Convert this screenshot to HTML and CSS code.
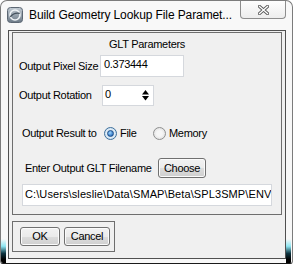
FILE: index.html
```html
<!DOCTYPE html>
<html lang="en">
<head>
    <meta charset="UTF-8">
    <title>Build Geometry Lookup File Parameters</title>
    <link rel="stylesheet" href="styles.css">
</head>
<body>
    <div class="window">
        <div class="titlebar">
            <svg class="app-icon" viewBox="0 0 16 16">
                <defs>
                    <linearGradient id="iconFill" x1="0" y1="0" x2="0" y2="1">
                        <stop offset="0" stop-color="#c3ccd4"/>
                        <stop offset="1" stop-color="#6c7a87"/>
                    </linearGradient>
                </defs>
                <rect x="0.5" y="0.5" width="15" height="15" rx="3" fill="url(#iconFill)" stroke="#5d6874"/>
                <circle cx="8" cy="8" r="5" fill="none" stroke="#eef2f5" stroke-width="1.6"/>
                <path d="M3.2 9.8 Q7.5 5 12.8 6.4" fill="none" stroke="#44505c" stroke-width="1.3"/>
            </svg>
            <span class="title">Build Geometry Lookup File Paramet...</span>
            <div class="close-btn">
                <svg width="11" height="10" viewBox="0 0 11 10">
                    <path d="M1.5 1.5 L9.5 8.5 M9.5 1.5 L1.5 8.5" stroke="#5c5c5c" stroke-width="3.2" stroke-linecap="square"/>
                    <path d="M1.5 1.5 L9.5 8.5 M9.5 1.5 L1.5 8.5" stroke="#ffffff" stroke-width="1.3" stroke-linecap="square"/>
                </svg>
            </div>
        </div>

        <div class="client">
            <div class="group">
                <div class="group-title">GLT Parameters</div>

                <div class="row row-pixel">
                    <span class="label label-pixel">Output Pixel Size</span>
                    <div class="field field-pixel">0.373444</div>
                </div>

                <div class="row row-rotation">
                    <span class="label label-rotation">Output Rotation</span>
                    <div class="field spinner">
                        <span class="spin-text">0</span>
                        <span class="spin-arrows">
                            <svg width="7" height="13" viewBox="0 0 7 13">
                                <polygon points="0,5.5 3.5,1 7,5.5" fill="#000"/>
                                <polygon points="0,7 7,7 3.5,11.5" fill="#000"/>
                            </svg>
                        </span>
                    </div>
                </div>

                <div class="row row-result">
                    <span class="label label-result">Output Result to</span>
                    <span class="option option-file"><span class="radio checked"></span><span class="option-text">File</span></span>
                    <span class="option"><span class="radio"></span><span class="option-text">Memory</span></span>
                </div>

                <div class="row row-filename">
                    <span class="label label-filename">Enter Output GLT Filename</span>
                    <button class="btn btn-choose">Choose</button>
                </div>

                <div class="row row-path">
                    <div class="field field-path">C:\Users\sleslie\Data\SMAP\Beta\SPL3SMP\ENV</div>
                </div>
            </div>

            <div class="button-box">
                <button class="btn btn-ok">OK</button>
                <button class="btn btn-cancel">Cancel</button>
            </div>
        </div>
    </div>
</body>
</html>
```

FILE: styles.css
```css
body {
    margin: 0;
    background: #fff;
    font-family: "Liberation Sans", Arial, sans-serif;
    font-size: 11px;
    letter-spacing: -0.3px;
    color: #000;
}

.window {
    position: relative;
    width: 293px;
    height: 264px;
    box-sizing: border-box;
    border: 1px solid #7c7c7c;
    border-bottom-color: #1a1a1a;
    border-radius: 7px 7px 3px 3px;
    background: #f8f8f8;
    display: flex;
    flex-direction: column;
    overflow: hidden;
}

/* dark glass glints in the bottom corners of the frame */
.window::before,
.window::after {
    content: "";
    position: absolute;
    bottom: 0;
    width: 5px;
    height: 24px;
    background: linear-gradient(to bottom, rgba(255, 255, 255, 0) 0%, #8fe6f2 30%, #0d3440 60%, #000 85%);
}
.window::before {
    left: 0;
}
.window::after {
    right: 1px;
}

.titlebar {
    height: 29px;
    flex-shrink: 0;
    display: flex;
    align-items: flex-start;
}
.app-icon {
    width: 16px;
    height: 16px;
    margin: 6px 0 0 6px;
    flex-shrink: 0;
}
.title {
    margin: 7px 0 0 6px;
    font-size: 12px;
    line-height: 14px;
    letter-spacing: -0.1px;
    white-space: nowrap;
}
.close-btn {
    margin-left: auto;
    margin-right: 6px;
    width: 46px;
    height: 18px;
    box-sizing: border-box;
    border: 1px solid #8d8d8d;
    border-top: none;
    border-radius: 0 0 4px 4px;
    background: linear-gradient(#fefefe, #ededed);
    display: flex;
    align-items: center;
    justify-content: center;
    flex-shrink: 0;
}

.client {
    margin: 0 6px 0 7px;
    height: 229px;
    box-sizing: border-box;
    border: 1px solid #505050;
    background: #f0f0f0;
}

.group {
    margin: 1px 3px 0;
    height: 183px;
    box-sizing: border-box;
    border: 1px solid #6e6e6e;
}
.group-title {
    margin-top: 5px;
    line-height: 13px;
    text-align: center;
}

.row {
    display: flex;
    align-items: center;
}
.label {
    line-height: 13px;
    white-space: nowrap;
    flex-shrink: 0;
}

.field {
    box-sizing: border-box;
    border: 1px solid #d5d8dd;
    background: #fff;
    line-height: 16px;
    white-space: nowrap;
    overflow: hidden;
}

.row-pixel {
    margin-top: 4px;
    padding-left: 6px;
}
.label-pixel {
    width: 81px;
}
.field-pixel {
    width: 84px;
    height: 22px;
    padding-left: 3px;
}

.row-rotation {
    margin-top: 8px;
    padding-left: 6px;
}
.label-rotation {
    width: 83px;
}
.spinner {
    width: 52px;
    height: 21px;
    display: flex;
}
.spin-text {
    flex: 1;
    padding-left: 2px;
}
.spin-arrows {
    width: 12px;
    padding-left: 1px;
    box-sizing: border-box;
    display: flex;
    align-items: center;
}

.row-result {
    margin-top: 20px;
    padding-left: 9px;
    height: 14px;
}
.label-result {
    width: 82px;
}
.option {
    display: flex;
    align-items: center;
    line-height: 13px;
}
.option-file {
    width: 49px;
}
.option-text {
    margin-left: 3px;
}
.radio {
    width: 13px;
    height: 13px;
    box-sizing: border-box;
    border: 1px solid #8e8f8f;
    border-radius: 50%;
    background: radial-gradient(circle, #f6f6f6 35%, #d6d6d6 100%);
    display: flex;
    align-items: center;
    justify-content: center;
    flex-shrink: 0;
}
.radio.checked {
    border-color: #3d6f9c;
    background: radial-gradient(circle, #e9f3fb 40%, #b9d3e8 100%);
}
.radio.checked::after {
    content: "";
    width: 5px;
    height: 5px;
    border-radius: 50%;
    border: 1px solid #1c4d86;
    background: radial-gradient(circle at 40% 35%, #9fd8ff, #2a6fc0 75%);
}

.row-filename {
    margin-top: 18px;
    padding-left: 12px;
}
.label-filename {
    width: 133px;
}

.row-path {
    margin-top: 6px;
    padding-left: 9px;
}
.field-path {
    width: 250px;
    height: 22px;
    padding-left: 2px;
    line-height: 19px;
    letter-spacing: 0.1px;
}

.btn {
    box-sizing: border-box;
    height: 19px;
    padding: 0;
    border: 1px solid #707070;
    border-radius: 3px;
    background: linear-gradient(#f2f2f2 0%, #ebebeb 50%, #dddddd 50%, #cfcfcf 100%);
    box-shadow: inset 0 0 0 1px #fbfbfb;
    font-family: "Liberation Sans", Arial, sans-serif;
    font-size: 11px;
    letter-spacing: -0.3px;
    color: #000;
    line-height: 15px;
    text-align: center;
}
.btn-choose {
    width: 48px;
    height: 20px;
}

.button-box {
    margin: 6px 0 0 3px;
    width: 103px;
    height: 31px;
    box-sizing: border-box;
    border: 1px solid #6e6e6e;
    padding: 5px 0 0 7px;
    display: flex;
    align-items: flex-start;
    gap: 4px;
}
.btn-ok {
    width: 40px;
}
.btn-cancel {
    width: 46px;
}
```
